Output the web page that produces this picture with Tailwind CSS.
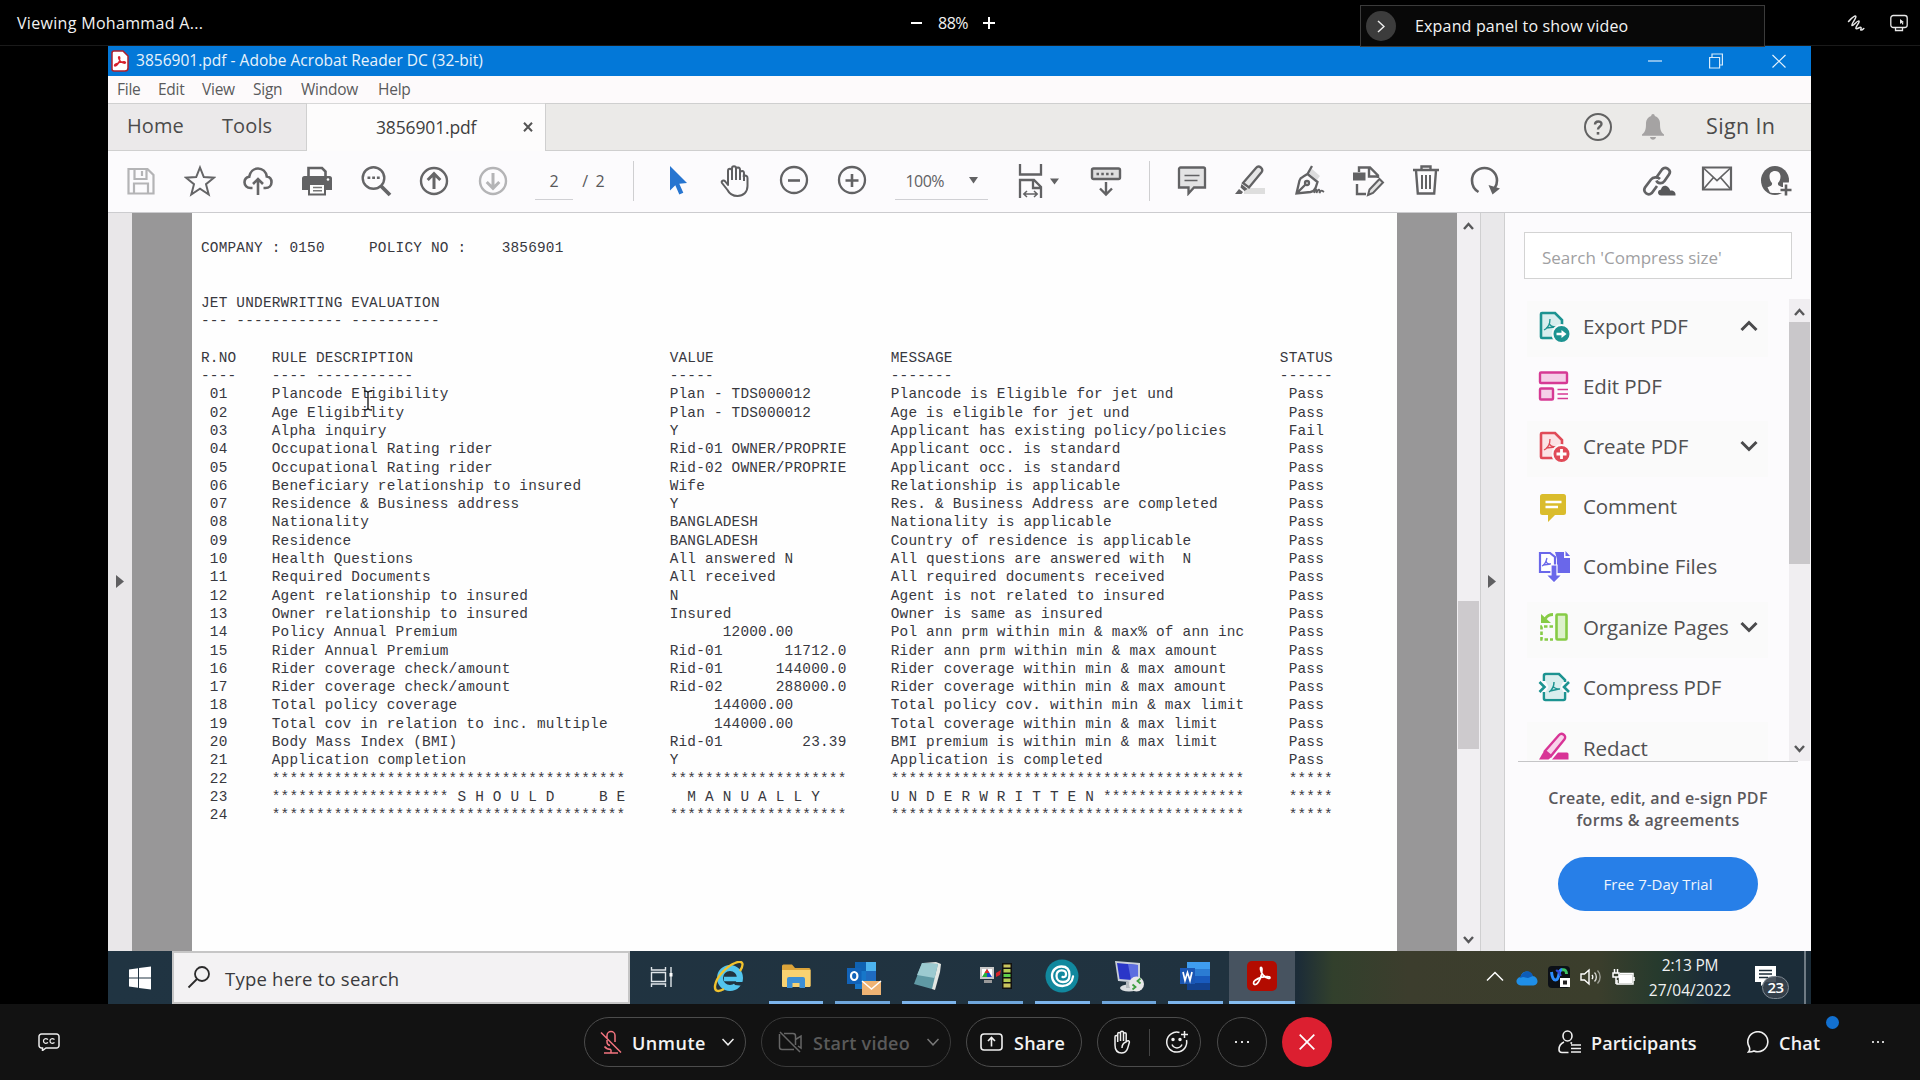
<!DOCTYPE html>
<html lang="en">
<head>
<meta charset="utf-8">
<title>Screen share</title>
<script src="https://cdn.jsdelivr.net/npm/@tailwindcss/browser@4"></script>
</head>
<body class="w-[1920px] h-[1080px] overflow-hidden bg-black font-['Open_Sans',sans-serif] flex flex-col relative">

<!-- meeting header -->
<header class="h-[46px] shrink-0 flex items-center border-b border-[#1a1a1a] text-[#f2f2f2] whitespace-nowrap">
  <div class="w-[910px] pl-[17px] text-[16px] tracking-[0.32px]"><span>Viewing Mohammad A...</span></div>
  <div class="flex items-center w-[450px]">
    <svg class="w-[14px] h-[14px]" viewBox="0 0 14 14" stroke="#fff" stroke-width="2"><path d="M1 7h11"/></svg>
    <span class="w-[58px] text-center text-[16px] tracking-[-0.5px]">88%</span>
    <svg class="w-[14px] h-[14px]" viewBox="0 0 14 14" stroke="#fff" stroke-width="2"><path d="M1 7h12M7 1v12"/></svg>
  </div>
  <div class="grow"></div>
  <svg class="w-[18px] h-[18px] mr-[25px]" viewBox="0 0 18 18" fill="none" stroke="#e8e8e8" stroke-width="1.500" stroke-linecap="round" stroke-linejoin="round"><path d="M1.500 7.500C4 5 7.500 1 8.800 2.200 10 3.500 4 10 5 11.500 6 12.500 10.500 6 12 7c1.200 1.200-4 6-3 7.500 1 1.200 4-2 5-1 .8.800-.8 2-.2 2.500.8.500 2-.5 3-1.500"/></svg>
  <svg class="w-[18px] h-[18px] mr-[12px]" viewBox="0 0 18 18" fill="none" stroke="#e8e8e8" stroke-width="1.300"><rect x=".8" y="1.500" width="16.400" height="12" rx="2.500"/><path d="M5.500 14v2.500h7V14"/><path d="M10 5v5l1.500-1.300 1 2L13.500 10 12.600 8.300h1.600z" fill="#e8e8e8" stroke="none"/></svg>
</header>

<!-- shared desktop -->
<main class="mx-[108px] w-[1703px] h-[958px] shrink-0 flex flex-col bg-[#fcfbfd] text-[#4b4b4b]">
  <div class="h-[30px] shrink-0 bg-[#0378d8] flex items-center text-white whitespace-nowrap">
    <svg class="ml-[3px] w-[18px] h-[22px]" viewBox="0 0 18 22"><path d="M3 1h9l5 5v12a3 3 0 0 1-3 3H3a2 2 0 0 1-2-2V3a2 2 0 0 1 2-2z" fill="#fff" stroke="#b0202c" stroke-width="1.500"/><path d="M4 16c2.500-.5 4.700-4 4.800-8 0-1.800-1.500-1.800-1.200 0 .4 2.500 3 5 6 5.200 1.200 0 1.200-1.400-.3-1.500-3-.1-6 .9-8.800 2.500-1.200.7-1.200 1.800-.5 1.800z" fill="none" stroke="#d8202c" stroke-width="1.400"/></svg>
    <span class="ml-[7px] text-[15.5px] tracking-[0.02px] text-[#e9f3fb]">3856901.pdf - Adobe Acrobat Reader DC (32-bit)</span>
    <div class="grow"></div>
    <svg class="w-[14px] h-[16px] mr-[47px]" viewBox="0 0 14 16" stroke="#d8ebfa" stroke-width="1.200"><path d="M0 8h14"/></svg>
    <svg class="w-[14px] h-[16px] mr-[49px]" viewBox="0 0 14 16" fill="none" stroke="#d8ebfa" stroke-width="1.200"><path d="M.6 4.500h10v10.500H.6zM3 4.500V1h10.400v11h-2.600"/></svg>
    <svg class="w-[14px] h-[16px] mr-[25px]" viewBox="0 0 14 16" fill="none" stroke="#e6f2fc" stroke-width="1.200"><path d="M.5 2l13 12.500M13.500 2l-13 12.500"/></svg>
  </div>

  <nav class="h-[27px] shrink-0 flex items-center text-[15.5px] tracking-[-0.25px] text-[#5a5a5c] bg-[#fdfafb] pl-[9px] whitespace-nowrap">
    <span class="w-[41px]">File</span><span class="w-[44px]">Edit</span><span class="w-[51px]">View</span><span class="w-[48px]">Sign</span><span class="w-[77px]">Window</span><span>Help</span>
  </nav>

  <!-- tabs -->
  <div class="h-[48px] shrink-0 flex whitespace-nowrap">
    <div class="w-[199px] bg-[#ebe9ea] border-y border-r border-[#d0d0d0] flex items-center pl-[19px] pb-[2px] text-[20px] tracking-[0.1px]"><span class="w-[95px]">Home</span><span>Tools</span></div>
    <div class="w-[238px] bg-[#fdfcfc] border-t border-[#d8d8d8] flex items-center text-[17.5px] tracking-[-0.15px] text-[#3f3f3f]"><span class="ml-[69px] w-[147px]">3856901.pdf</span>
      <svg class="w-[10px] h-[10px] mb-[2px]" viewBox="0 0 10 10" stroke="#555" stroke-width="2"><path d="M1 .8l8 8.400M9 .8l-8 8.400"/></svg></div>
    <div class="grow bg-[#ebeae8] border-y border-l border-[#cfcfcf] flex items-center pb-[1px]">
      <div class="grow"></div>
      <svg class="w-[30px] h-[30px] mr-[29px]" viewBox="0 0 30 30" fill="none" stroke="#626262" stroke-width="2"><circle cx="15" cy="15" r="13"/><path d="M12 12.500c0-4 6.500-4 6.500-.5 0 2.500-3.500 2.500-3.500 5.500" stroke-width="2.400"/><path d="M13.700 20h2.600v2.600h-2.600z" fill="#626262" stroke="none"/></svg>
      <svg class="w-[22px] h-[27px] mr-[42px]" viewBox="0 0 22 27" fill="#a5a3a3"><path d="M11 1c1 0 1.800.8 1.800 1.900C16 4 18 6.500 18 10c0 6 .5 9 4 11.500v1.200H0v-1.200C3.500 19 4 16 4 10c0-3.500 2-6 5.200-7.100C9.200 1.800 10 1 11 1zM8 24h6c-.3 1.700-1.500 2.700-3 2.700S8.300 25.700 8 24z"/></svg>
      <span class="w-[105px] text-[21.5px] tracking-[0.35px]">Sign In</span>
    </div>
  </div>

  <!-- toolbar -->
  <div class="h-[62px] shrink-0 border-b border-[#cccccf] flex items-center pl-[4px] pr-[6px] pb-[1px] text-[16px]">
    <div class="flex [&>*]:w-[58.6px] [&>*]:flex [&>*]:justify-center">
      <div><svg class="w-[30px] h-[32px]" viewBox="0 0 30 32" fill="none" stroke="#b4b4b6" stroke-width="2.200"><path d="M2.500 4h19l6 6v18.500h-25zM8.500 4v10h12V4M16 6v5M8 28V18.500h14V28"/></svg></div>
      <div><svg class="w-[32px] h-[32px]" viewBox="0 0 32 32" fill="none" stroke="#656567" stroke-width="2"><path d="M16 2.500l3.800 9.600 10.200.6-8 6.500 2.700 10.300L16 23.700l-8.700 5.800L10 19.200l-8-6.500 10.200-.6z"/></svg></div>
      <div><svg class="w-[32px] h-[32px]" viewBox="0 0 32 32" fill="none" stroke="#656567" stroke-width="2.600"><path d="M10.500 23H8.500C5 23 2.500 20.500 2.500 17.300c0-3 2-5 4.700-5.500C8 7 11.500 3.500 16 3.500s8 3.300 8.800 8c2.700.4 4.700 2.700 4.700 5.700 0 3.300-2.500 5.800-6 5.800h-2"/><path d="M16 30V14.500M11 19l5-5 5 5"/></svg></div>
      <div><svg class="w-[32px] h-[32px]" viewBox="0 0 32 32"><path d="M7.500 11V3h13.500l3.500 3.500V11" fill="none" stroke="#626264" stroke-width="2.600"/><path d="M3.500 11h25a2.500 2.500 0 0 1 2.500 2.500V25H1V13.500A2.500 2.500 0 0 1 3.500 11z" fill="#626264"/><path d="M8 19h16v10.500H8z" fill="#fff" stroke="#626264" stroke-width="2"/><path d="M12 22.500h9M12 25.800h9" stroke="#777" stroke-width="1.500"/><circle cx="27" cy="14.500" r="1.300" fill="#fff"/></svg></div>
      <div><svg class="w-[32px] h-[32px]" viewBox="0 0 32 32" fill="none" stroke="#656567"><circle cx="13.500" cy="13" r="10.800" stroke-width="2.400"/><path d="M20.500 20.500l9.500 9.500" stroke-width="3.800"/><path d="M7.500 11.500h2.800v2.600H7.500zM12.200 11.500H15v2.600h-2.800zM16.900 11.500h2.800v2.600h-2.800z" fill="#656567" stroke="none"/></svg></div>
      <div><svg class="w-[32px] h-[32px]" viewBox="0 0 32 32" fill="none" stroke="#656567" stroke-width="2.400"><circle cx="16" cy="16" r="13"/><path d="M16 24V9M9.700 15l6.300-6.300 6.300 6.300" stroke-width="3"/></svg></div>
      <div><svg class="w-[32px] h-[32px]" viewBox="0 0 32 32" fill="none" stroke="#b4b4b6" stroke-width="2.400"><circle cx="16" cy="16" r="13"/><path d="M16 8v15M9.700 17l6.300 6.300 6.300-6.300" stroke-width="3"/></svg></div>
    </div>
    <div class="w-[112px] flex items-center h-[40px] border-r border-[#cfcfd1] pl-[13px] text-[#58585a]">
      <span class="w-[38px] h-[37px] border-b border-[#d0d0d4] text-center pt-[6px]">2</span><span class="ml-[9px] tracking-[1.7px]">/ 2</span>
    </div>
    <div class="flex ml-[13px] [&>*]:w-[58.6px] [&>*]:flex [&>*]:justify-center">
      <div><svg class="w-[22px] h-[32px] ml-[3px]" viewBox="0 0 22 32" fill="#2775d0"><path d="M3 2v24.500l5.300-5.300 4 9.300 4-1.800-4-9L20 19z"/></svg></div>
      <div><svg class="w-[32px] h-[34px]" viewBox="0 0 32 34" fill="none" stroke="#5f5f61" stroke-width="2" stroke-linejoin="round"><path d="M9 19V7c0-3 3.800-3 4 0V4.500c0-3 4-3 4 0v1c.300-3 4-2.700 4 .3v3c.5-2.500 4-2.300 4 .5l-.3 3.200c1-1.500 4-1 3.800 1.500V22c0 6-4 10-10 10-5 0-8-2-10-6L3 19c-1-2 1.500-3.500 3.300-1.500L9 21zM13 7v9M17 5v11M21 8v8M25 11v6"/></svg></div>
      <div><svg class="w-[32px] h-[32px]" viewBox="0 0 32 32" fill="none" stroke="#626264" stroke-width="2.300"><circle cx="16" cy="16" r="13"/><path d="M10 16.500h12" stroke-width="2.600"/></svg></div>
      <div><svg class="w-[32px] h-[32px]" viewBox="0 0 32 32" fill="none" stroke="#626264" stroke-width="2.300"><circle cx="16" cy="16" r="13"/><path d="M9.500 16.500h13M16 10v13" stroke-width="2.600"/></svg></div>
    </div>
    <div class="w-[93px] h-[37px] ml-[13px] border-b border-[#d0d0d4] flex items-center pl-[11px] text-[#626264] tracking-[-0.6px]"><span class="w-[63px] pt-[1px]">100%</span><svg class="w-[9px] h-[7px]" viewBox="0 0 9 7" fill="#626264"><path d="M0 0h9L4.500 6.500z"/></svg></div>
    <svg class="w-[46px] h-[34px] ml-[28px]" viewBox="0 0 46 34" fill="none" stroke="#626264" stroke-width="2.300"><path d="M4 0v10.500h21V0M4 34V16h14l7 7v11M17 16.500V24h8"/><path d="M8 30h13M11 27l-3.200 3 3.200 3M18 27l3.200 3-3.200 3" stroke-width="1.500"/><path d="M34 14.500h9l-4.500 6z" fill="#626264" stroke="none"/></svg>
    <svg class="w-[32px] h-[32px] ml-[28px]" viewBox="0 0 32 32" fill="none" stroke="#626264" stroke-width="2.400"><rect x="2" y="3.500" width="28" height="10.500" rx="1.500" fill="#dededf"/><path d="M6.500 9h19" stroke-dasharray="2.500 2.300"/><path d="M16 17v12M10 23.500l6 6 6-6"/></svg>
    <div class="w-[28px] h-[40px] border-r border-[#cfcfd1]"></div>
    <div class="flex ml-[13px] [&>*]:w-[58.6px] [&>*]:flex [&>*]:justify-center">
      <div><svg class="w-[32px] h-[32px]" viewBox="0 0 32 32" fill="#e3e3e4" stroke="#626264" stroke-width="2.300"><path d="M4.500 3.500h23a1.500 1.500 0 0 1 1.500 1.500v18.500H18l-5.500 6v-6H3V5a1.500 1.500 0 0 1 1.500-1.500z"/><path d="M8.500 11.500h15M8.500 16.500h13" stroke-width="1.700"/></svg></div>
      <div><svg class="w-[32px] h-[32px]" viewBox="0 0 32 32"><path d="M10 24h21v6H10z" fill="#dedede"/><path d="M9 19L22 4c3-3.500 8 .8 5.500 4.200L15 23.500z" fill="#e6e6e7" stroke="#626264" stroke-width="2.300"/><path d="M7.500 20l6 5-3 2-4-3.500zM5 25l4 3-1.500 2H1z" fill="#626264"/></svg></div>
      <div><svg class="w-[34px] h-[32px]" viewBox="0 0 34 32" fill="none" stroke="#626264" stroke-width="2.300"><path d="M20 5l8 7-3 4-9-7.500z" fill="#dcdcdd" stroke="none"/><path d="M15.500 10l10 8-2 6c-1 2.500-2.500 3.500-5 4L4.500 29.500l3-13c.5-2 1.500-3 3.500-3.700zM4.500 29.500l9-9M15.500 10l4.500-8"/><circle cx="15" cy="19" r="2"/><path d="M22 29c2-5 3-4 2.500 0 2-5 3.500-4 3 0 2-4 3-2 4.500-1" stroke-width="1.800"/></svg></div>
      <div><svg class="w-[34px] h-[34px]" viewBox="0 0 34 34" fill="none" stroke="#626264" stroke-width="2.400"><path d="M8 8V3.500h11l8 8V14M18 4v8.500h9M6 20v10h9"/><path d="M2 8.500h12.500v8H2z" fill="#626264" stroke="none"/><path d="M17 31l1.500-5.500L28.500 15l3.500 3.500L22 29z" fill="#e2e2e2" stroke-width="2"/></svg></div>
      <div><svg class="w-[30px] h-[32px]" viewBox="0 0 30 32" fill="none" stroke="#626264" stroke-width="2.400"><path d="M2 6h26M10.500 6V2.500h9V6M5 6.500l1.800 23h16.400l1.800-23"/><path d="M11 11v14M15 11v14M19 11v14" stroke-width="2"/></svg></div>
      <div><svg class="w-[30px] h-[32px]" viewBox="0 0 30 32" fill="none" stroke="#626264" stroke-width="2.600"><path d="M8.500 28C3.500 25 2 20.500 2 16.500 2 9 7.500 4 14.500 4S27 9.500 27 16.500c0 3-.8 5.500-2.300 7.500"/><path d="M18.500 21l4 9.500 7.500-6z" fill="#626264" stroke="none"/></svg></div>
    </div>
    <div class="grow"></div>
    <div class="flex [&>*]:w-[58.6px] [&>*]:flex [&>*]:justify-center">
      <div><svg class="w-[34px] h-[32px]" viewBox="0 0 34 32" fill="none" stroke="#626264" stroke-width="2.700"><path d="M14 13l6-8.500c3.500-4 10 .5 7 5L22.500 16c-2.500 3.500-7 2.500-8-.5"/><path d="M18 14c-2.500-2.500-7-2-9 .5L3 22.500c-2.500 4.500 3 9 6.800 5.500L15 21"/><path d="M19 30.500c-4-.3-4-5.500 0-6 .5-4 5-5 7.500-2 1 1.300 1.500 2 1.500 3 3-.5 6 1 5.500 5z" fill="#58585a" stroke="none"/></svg></div>
      <div><svg class="w-[32px] h-[28px]" viewBox="0 0 32 28" fill="none" stroke="#626264" stroke-width="2.200"><path d="M2 2.500h28v22H2z"/><path d="M2.500 3L16 15.500 29.500 3M2.500 24l10-11.500M29.500 24l-10-11.500" stroke-width="1.700"/></svg></div>
      <div><svg class="w-[32px] h-[32px]" viewBox="0 0 32 32"><ellipse cx="15" cy="15.500" rx="14" ry="14.500" fill="#5f5f61"/><path d="M15 6c3.500 0 5.500 2.300 5.500 5.500 0 2.800-1 5-2.500 6.500-.4 2.300 1 3 4.500 4.200L20 27.500c-3 .8-7 .8-10 0L7.500 22.200C11 21 12.400 20.300 12 18c-1.500-1.500-2.500-3.700-2.500-6.500C9.500 8.300 11.500 6 15 6z" fill="#fcfbfd"/><path d="M26 17.500v14M18.500 25h14" stroke="#fcfbfd" stroke-width="6"/><path d="M26 19.500v11M20.500 25h11" stroke="#5f5f61" stroke-width="2.600"/></svg></div>
    </div>
  </div>

  <!-- document area -->
  <section class="h-[738px] shrink-0 flex overflow-hidden">
    <div class="w-[24px] bg-[#e9e7e9] flex items-center justify-center pb-[2px]"><svg class="w-[8px] h-[13px]" viewBox="0 0 8 13" fill="#5f5f61"><path d="M0 0l8 6.500L0 13z"/></svg></div>
    <div class="w-[60px] bg-[#989798]"></div>
    <div class="w-[1205px] bg-[#fefefe] pl-[9px] pt-[26px] relative">
      <pre id="report" class="font-['Liberation_Mono',monospace] text-[14.4px] tracking-[0.207px] leading-[18.3px] text-[#38383e]"></pre>
      <svg class="absolute left-[171px] top-[177px] w-[10px] h-[21px]" viewBox="0 0 10 21" fill="none" stroke="#222" stroke-width="1.400"><path d="M1 1c2 0 4 .5 4 2v15c0 1.500 2 2 4 2M9 1C7 1 5 1.500 5 3M1 20c2 0 4-.5 4-2"/></svg>
    </div>
    <div class="w-[60px] bg-[#989798]"></div>
    <div class="w-[23px] bg-[#f1eff2] flex flex-col items-center">
      <svg class="w-[11px] h-[8px] mt-[9px]" viewBox="0 0 11 8" fill="none" stroke="#58585a" stroke-width="2.400"><path d="M1 7l4.500-5L10 7"/></svg>
      <div class="w-[21px] h-[148px] mt-[371px] bg-[#cdcacd]"></div>
      <div class="grow"></div>
      <svg class="w-[11px] h-[8px] mb-[7px]" viewBox="0 0 11 8" fill="none" stroke="#58585a" stroke-width="2.400"><path d="M1 1l4.500 5L10 1"/></svg>
    </div>
    <div class="w-[25px] bg-[#e9e8ea] border-x border-[#cfcfd0] flex items-center pl-[7px] pb-[2px]"><svg class="w-[8px] h-[13px]" viewBox="0 0 8 13" fill="#5f5f61"><path d="M0 0l8 6.500L0 13z"/></svg></div>

    <!-- tools pane -->
    <aside class="w-[306px] flex flex-col">
      <div class="mt-[19px] ml-[19px] w-[268px] h-[47px] shrink-0 border border-[#d3d3d3] bg-white flex items-center pl-[17px] pt-[4px] text-[17px] text-[#a0a0a2]"><span>Search 'Compress size'</span></div>
      <div class="h-[482px] shrink-0 pt-[20px] flex">
        <div class="w-[263px] mr-[21px] h-[462px] overflow-hidden pl-[22px] pt-[2px] text-[20.5px] tracking-[-0.1px] text-[#505052] whitespace-nowrap [&>*]:h-[56px] [&>*]:mb-[4.200px] [&>*]:pl-[11px] [&>*]:flex [&>*]:items-center [&_span]:ml-[13px] [&_span]:w-[157px] [&_span]:pb-[6px] [&_svg]:shrink-0 [&_svg]:mb-[6px]">
          <div class="bg-[#fafafa]"><svg class="w-[32px] h-[32px]" viewBox="0 0 32 32"><path d="M4 3h13l7 7v18H4a1 1 0 0 1-1-1V4a1 1 0 0 1 1-1z" fill="#d9eeee" stroke="#1c9391" stroke-width="2.600"/><path d="M6 20c4-2 6-6 6-11M11 13c1 3 3 4 7 4M8 18l9-1" fill="none" stroke="#1c9391" stroke-width="1.300"/><circle cx="23.500" cy="24" r="9" fill="#1c9391" stroke="#fafafa" stroke-width="2"/><path d="M18.500 22.700h5V20l5 4-5 4v-2.700h-5z" fill="#fff"/></svg><span>Export PDF</span><svg class="w-[18px] h-[12px]" viewBox="0 0 18 12" fill="none" stroke="#4a4a4c" stroke-width="3"><path d="M1.500 10L9 2.500l7.500 7.500"/></svg></div>
          <div><svg class="w-[32px] h-[32px]" viewBox="0 0 32 32" fill="#f5cfe8" stroke="#d63a94" stroke-width="2.400"><rect x="2" y="2.500" width="27" height="10.500" rx="1"/><rect x="2" y="18.500" width="13" height="11" rx="1"/><path d="M19.500 19.500h10.500M19.500 24h10.500M19.500 28.500h10.500" stroke-width="1.600"/></svg><span>Edit PDF</span></div>
          <div class="bg-[#fafafa]"><svg class="w-[32px] h-[32px]" viewBox="0 0 32 32"><path d="M4 3h13l7 7v18H4a1 1 0 0 1-1-1V4a1 1 0 0 1 1-1z" fill="#fbe3e5" stroke="#e04a57" stroke-width="2.600"/><path d="M6 20c4-2 6-6 6-11M11 13c1 3 3 4 7 4M8 18l9-1" fill="none" stroke="#e04a57" stroke-width="1.300"/><circle cx="23.500" cy="24" r="9" fill="#e04a57" stroke="#fafafa" stroke-width="2"/><path d="M23.500 19v10M18.500 24h10" stroke="#fff" stroke-width="2.800"/></svg><span>Create PDF</span><svg class="w-[18px] h-[12px]" viewBox="0 0 18 12" fill="none" stroke="#4a4a4c" stroke-width="3"><path d="M1.500 2L9 9.500 16.500 2"/></svg></div>
          <div><svg class="w-[32px] h-[32px]" viewBox="0 0 32 32" fill="#dabc2c"><path d="M4.500 3h21A2.500 2.500 0 0 1 28 5.500v16a2.500 2.500 0 0 1-2.500 2.500H17l-7 7v-7H4.500A2.500 2.500 0 0 1 2 21.500v-16A2.500 2.500 0 0 1 4.500 3z"/><path d="M7.500 11h16M7.500 16h12.500" stroke="#fff" stroke-width="2.400"/></svg><span>Comment</span></div>
          <div><svg class="w-[32px] h-[32px]" viewBox="0 0 32 32"><path d="M17 1h9v6h6v15H19V8z" fill="#6a67ea"/><path d="M27.500 0L32 5h-4.500z" fill="#6a67ea"/><path d="M2 2h10l5 4v15H2z" fill="#fff" stroke="#6a67ea" stroke-width="2.200"/><path d="M4 15c3-1 4-4 5-8M8 10c1 3 2 3 5 3M5 14l8-1" fill="none" stroke="#6a67ea" stroke-width="1.300"/><path d="M13 14h6v10h5l-8 8-8-8h5z" fill="#6a67ea" stroke="#fff" stroke-width="1.200"/></svg><span class="tracking-[0.05px]">Combine Files</span></div>
          <div class="bg-[#fafafa]"><svg class="w-[32px] h-[32px]" viewBox="0 0 32 32" fill="none" stroke="#86cb45" stroke-width="2.600"><rect x="18.500" y="3.500" width="10" height="25" rx="1" fill="#ddf1cb"/><path d="M15 15.500H3.500v13H15" stroke-dasharray="3.500 2"/><path d="M15 3.500c-4 0-6 1.500-7.500 4" stroke-width="2.800"/><path d="M3 3v9h10z" fill="#86cb45" stroke="none"/></svg><span>Organize Pages</span><svg class="w-[18px] h-[12px]" viewBox="0 0 18 12" fill="none" stroke="#4a4a4c" stroke-width="3"><path d="M1.500 2L9 9.500 16.500 2"/></svg></div>
          <div><svg class="w-[32px] h-[32px]" viewBox="0 0 32 32" fill="none" stroke="#1c9391" stroke-width="2.600"><path d="M6 10V4.500A1.500 1.500 0 0 1 7.500 3H21l6 6v2M6 21v6.500A1.500 1.500 0 0 0 7.500 29h18a1.500 1.500 0 0 0 1.500-1.500V21" fill="none"/><path d="M7.500 5h13l5 5-3 6 3 5v6.500h-18V21l3-5-3-6z" fill="#d9eeee" stroke="none"/><path d="M1.500 11l5 5-5 5M31 11l-5 5 5 5"/><path d="M11 21c3-2 5-5 5-10M15 15c1 2 3 3 7 3M12 20l9-2" stroke-width="1.500"/></svg><span>Compress PDF</span></div>
          <div class="bg-[#fafafa]"><svg class="w-[32px] h-[32px]" viewBox="0 0 32 32"><path d="M14 28.500l6-7h9a1.500 1.500 0 0 1 1.500 1.500v5.500z" fill="#d83496"/><path d="M7 20L21 4c3-3 8 1 5.500 4.200L13 25z" fill="#f8d3ea" stroke="#d83496" stroke-width="2.400"/><path d="M6 20l7.500 6-3 2.500H1z" fill="#d83496"/></svg><span class="!pb-[4px]">Redact</span></div>
        </div>
        <div class="w-[21px] h-[462px] bg-[#f0eef1] flex flex-col items-center">
          <svg class="w-[11px] h-[8px] mt-[9px] mb-[6px]" viewBox="0 0 11 8" fill="none" stroke="#58585a" stroke-width="2.400"><path d="M1 7l4.500-5L10 7"/></svg>
          <div class="w-full h-[242px] bg-[#c9c7ca]"></div>
          <div class="grow"></div>
          <svg class="w-[11px] h-[8px] mb-[8px]" viewBox="0 0 11 8" fill="none" stroke="#58585a" stroke-width="2.400"><path d="M1 1l4.500 5L10 1"/></svg>
        </div>
      </div>
      <div class="ml-[13px] w-[280px] h-px bg-[#c5c5c7]"></div>
      <p class="mt-[25px] w-full text-center text-[16px] tracking-[0.28px] leading-[22px] font-semibold text-[#5a585c] whitespace-nowrap">Create, edit, and e-sign PDF<br>forms &amp; agreements</p>
      <div class="mt-[26px] ml-[53px] w-[200px] h-[54px] rounded-full bg-[#277fe8] text-[#eef5fd] text-[15px] flex items-center justify-center whitespace-nowrap"><span>Free 7-Day Trial</span></div>
    </aside>
  </section>

  <!-- windows taskbar -->
  <footer class="h-[53px] shrink-0 flex bg-[linear-gradient(90deg,#203442_0,#20323f_1120px,#1c2c38_1190px,#32402c_1225px,#3c3d2d_1300px,#3b3e2c_1490px,#263a2d_1550px,#1b2c38_1600px)]">
    <div class="w-[64px] flex items-center justify-center"><svg class="w-[24px] h-[24px]" viewBox="0 0 24 24" fill="#fff"><path d="M1 3.500l9-1.300v9.300H1zM11 2l12-1.600v11.100H11zM1 12.500h9v9.300L1 20.500zM11 12.500h12v11L11 22z"/></svg></div>
    <div class="w-[458px] bg-[#f3f2f3] border-2 border-[#c6c6c6] flex items-center text-[18.5px] tracking-[0.22px] text-[#3a3a3c] whitespace-nowrap"><svg class="ml-[13px] w-[24px] h-[24px] mb-[2px]" viewBox="0 0 24 24" fill="none" stroke="#2b2b2b" stroke-width="1.800"><circle cx="15" cy="9" r="7"/><path d="M10 14L1.500 22.500"/></svg><span class="ml-[14px] pt-[2px]">Type here to search</span></div>
    <div class="w-[66px] flex items-center justify-center pr-[5px] pb-[2px]"><svg class="w-[24px] h-[24px]" viewBox="0 0 24 24" fill="none" stroke="#dfe5e9" stroke-width="1.400"><path d="M2.500 2v3h14V2M2.500 22v-3h14v3M2.500 7.500h14v9h-14zM22 2v20"/><path d="M20.500 8h3v3.500h-3z" fill="#fff" stroke="none"/></svg></div>
    <div class="flex [&>*]:w-[66.600px] [&>*]:flex [&>*]:items-center [&>*]:justify-center [&_svg]:mb-[1px]">
      <div><svg class="w-[32px] h-[32px]" viewBox="0 0 32 32"><circle cx="17" cy="17" r="10" fill="none" stroke="#53c5ee" stroke-width="6"/><path d="M11 18h17" stroke="#53c5ee" stroke-width="4.500"/><path d="M20 21h11v4l-9-1z" fill="#20323f"/><path d="M27 10c5-8 2-11-5-8C14 5 3 16 2 25c-.5 6 4 6 9 3" fill="none" stroke="#f1c22e" stroke-width="2.400"/></svg></div>
      <div class="border-b-3 border-[#7cb4ec] mx-[6px] !w-[54.600px]"><svg class="w-[30px] h-[26px]" viewBox="0 0 30 26"><path d="M1 3a1.500 1.500 0 0 1 1.500-1.500H11L14 5h14a1.500 1.500 0 0 1 1.500 1.500V23H1z" fill="#dca43a"/><path d="M1 7h28.500v16a1 1 0 0 1-1 1H2a1 1 0 0 1-1-1z" fill="#f9d271"/><path d="M6 25v-9a2 2 0 0 1 2-2h14a2 2 0 0 1 2 2v9h-5.500v-5h-7v5z" fill="#3d8fd4"/></svg></div>
      <div class="border-b-3 border-[#6fa6dc] mx-[6px] !w-[54.600px]"><svg class="w-[36px] h-[34px] ml-[3px] !mb-[-4px]" viewBox="0 0 36 34"><path d="M9 1h21v27H9z" fill="#1777c9"/><path d="M20 1h10v9H20z" fill="#4cb3ee"/><path d="M20 10h10v9H20z" fill="#1f6bc0"/><path d="M9 1h11v9H9z" fill="#0f62b2"/><path d="M1 7h14.500v16H1z" fill="#1263b8"/><ellipse cx="8.200" cy="15" rx="3.200" ry="4" fill="none" stroke="#fff" stroke-width="2.200"/><path d="M16 20h19v14H16z" fill="#eeb374"/><path d="M16 20l9.500 8L35 20" fill="none" stroke="#fff" stroke-width="1.500"/></svg></div>
      <div class="border-b-3 border-[#7cb4ec] mx-[6px] !w-[54.600px]"><svg class="w-[30px] h-[30px] mr-[3px]" viewBox="0 0 30 30"><path d="M10 2l13-1 5 2-1 8-5 18-3-1z" fill="#e3e7e3"/><path d="M9 2l16 1-6 25-18-5z" fill="#5f99a4"/><path d="M9 2l16 1-3.500 14L4 14z" fill="#9ccad0"/></svg></div>
      <div class="border-b-3 border-[#6fa6dc] mx-[6px] !w-[54.600px]"><svg class="w-[34px] h-[28px]" viewBox="0 0 34 28"><path d="M1 5h14v12H1z" fill="#c8c8c8"/><path d="M3 7h10v8H3z" fill="#fff"/><path d="M8 7l5 8H8z" fill="#1a44d0"/><path d="M8 7v8H3z" fill="#28b03c"/><path d="M8 7l2.500 4h-5z" fill="#e62a2a"/><path d="M5 18h8v3H5z" fill="#9a9a9a"/><path d="M17 11l5-3-1 5-4 2z" fill="#d8232a"/><path d="M23 1h10v26H23z" fill="#111"/><path d="M24.500 2.500h7v3h-7zM24.500 21.500h7v4h-7z" fill="#c9c45e"/><path d="M24.500 7h7v3.500h-7zM24.500 16.500h7v3.500h-7z" fill="#b4cc55"/><path d="M24.500 12h7v3h-7z" fill="#5fd04a"/></svg></div>
      <div class="border-b-3 border-[#7cb4ec] mx-[6px] !w-[54.600px]"><svg class="w-[34px] h-[34px]" viewBox="0 0 34 34"><circle cx="17" cy="17" r="16.500" fill="#11889e"/><path d="M28 17.500c-.5 5.500-5 9.500-10.500 9.500C11.500 27 7 22.500 7 17S11 7.500 16.500 7.500 24.500 11 24.500 16s-3 7-6.500 7-6.500-2.300-6.500-6 2.300-5.700 5.300-5.700 4.500 2 4.200 4.300-2 3-3.500 2.300" fill="none" stroke="#fff" stroke-width="2.300" stroke-linecap="round"/></svg></div>
      <div class="border-b-3 border-[#6fa6dc] mx-[6px] !w-[54.600px]"><svg class="w-[32px] h-[32px]" viewBox="0 0 32 32"><ellipse cx="16" cy="28" rx="9" ry="3.500" fill="#d9dde0"/><path d="M13 22h8v6h-8z" fill="#b3b9be"/><path d="M2 1l25 2v20L5 21z" fill="#c9cfd8"/><path d="M4 3l21 2v15.500L6.500 19z" fill="#2a36c8"/><path d="M15 4l10 1v15.500L18 20z" fill="#5d6ee0"/><circle cx="23.500" cy="24" r="7.500" fill="#e8e8e8"/><path d="M19.500 24.500l3 2.500-3 2.500M27.500 18.500l-3 2.500 3 2.500" fill="none" stroke="#3f9f3f" stroke-width="1.800"/></svg></div>
      <div class="border-b-3 border-[#7cb4ec] mx-[6px] !w-[54.600px]"><svg class="w-[32px] h-[30px]" viewBox="0 0 32 30"><path d="M8 1h23v7H8z" fill="#3f9df0"/><path d="M8 8h23v7H8z" fill="#2b7cd3"/><path d="M8 15h23v7H8z" fill="#185abd"/><path d="M8 22h23v7H8z" fill="#124290"/><path d="M1 7h15v16H1z" fill="#1a56b4"/><path d="M4 11l2 8.500 2.500-8 2.500 8L13 11" fill="none" stroke="#fff" stroke-width="1.700"/></svg></div>
      <div class="border-b-3 border-[#86bdf0] bg-[#475360]"><svg class="w-[30px] h-[30px]" viewBox="0 0 30 30"><rect width="30" height="30" rx="5" fill="#b30b00"/><path d="M8.500 23.500c3-1 7-9 6.500-15.500-.3-2.500-2-2-1.500.5.500 4 4.500 8.500 8 9 2 .2 2.200-1.600-.3-1.800-4.700-.5-9 .8-13 3.500-2.500 1.800-2 4.800.3 4.300z" fill="none" stroke="#fff" stroke-width="1.700"/></svg></div>
    </div>
    <div class="grow"></div>
    <svg class="w-[18px] h-[53px] mr-[12px]" viewBox="0 0 18 53" fill="none" stroke="#fff" stroke-width="1.500"><path d="M1 29.500l8-8 8 8"/></svg>
    <svg class="w-[22px] h-[16px] mr-[10px] mt-[19px]" viewBox="0 0 22 16"><path d="M5 15.500C-1 15-1 8 4.500 7 6 0 14.500-.5 16.500 6c6 .5 7 9 1 9.500z" fill="#1f8fe8"/><path d="M4 8C6 0 15-1 17 6l-5 2-5-1z" fill="#0d5cb8"/></svg>
    <svg class="w-[22px] h-[22px] mr-[10px] mt-[15px]" viewBox="0 0 22 22"><rect width="22" height="22" rx="4" fill="#0c1016"/><path d="M3.500 6c.5 5 2 8 4 8s3-3 3.500-6 1.500-4.500 3.500-4.500" fill="none" stroke="#2d8cff" stroke-width="3"/><path d="M8 5c2-1 4 2 4.500 5" fill="none" stroke="#3049d8" stroke-width="2.500"/><path d="M14 4c3-1 4.500 1 4.500 4" fill="none" stroke="#3cc264" stroke-width="3"/><path d="M12 12h10v9H12z" fill="#fff"/><path d="M15 14.500h4v4h-4z" fill="#222"/></svg>
    <svg class="w-[22px] h-[18px] mr-[10px] mt-[17px]" viewBox="0 0 22 18" fill="none" stroke="#fff" stroke-width="1.400"><path d="M1 6v6h3.500L9 16V2L4.500 6zM12 7c1 1 1 3 0 4"/><path d="M14.500 4.500c2.500 2.500 2.500 6.500 0 9" opacity=".8"/><path d="M17.500 2.500c3.500 3.500 3.500 9.500 0 13" opacity=".5"/></svg>
    <svg class="w-[23px] h-[17px] mr-[12px] mt-[18px]" viewBox="0 0 23 17" fill="none" stroke="#fff" stroke-width="1.500"><path d="M8 4.500h13v10.500H5V11"/><path d="M7.500 6h12v7.500h-12z" fill="#fff"/><path d="M22 8v4M1 4h6v4H1zM2.500 4V0M5.500 4V0M4 8v7"/></svg>
    <div class="w-[86px] flex flex-col items-center text-[15.500px] leading-[25px] text-[#f0f2f2] pt-[2px] whitespace-nowrap"><span class="tracking-[-0.2px]">2:13 PM</span><span>27/04/2022</span></div>
    <div class="w-[71px] relative flex pl-[22px] pt-[15px]">
      <svg class="w-[21px] h-[20px]" viewBox="0 0 21 20"><path d="M0 0h21v16H11l-5 4v-4H0z" fill="#fff"/><path d="M4 4.500h13M4 8h13M4 11.500h9" stroke="#1b2c38" stroke-width="1.400"/></svg>
      <span class="absolute left-[29px] top-[25px] w-[27px] h-[23px] rounded-full bg-[#38434e]/90 border border-[#7d8790] text-white text-[15px] font-semibold leading-[21px] text-center tracking-[-0.5px]">23</span>
    </div>
    <div class="w-[7px] border-l-2 border-[#6f7b84]"></div>
  </footer>
</main>

<!-- meeting controls -->
<footer class="h-[76px] shrink-0 bg-[#121212] flex items-center text-[#f3f3f3] font-semibold text-[18px] tracking-[0.25px] whitespace-nowrap [&>*]:shrink-0 [&_span]:pt-[3px]">
  <svg class="ml-[38px] w-[22px] h-[18px]" viewBox="0 0 22 18" fill="none" stroke="#ededed" stroke-width="1.500"><path d="M3.500 1h15A2.500 2.500 0 0 1 21 3.500v9a2.500 2.500 0 0 1-2.500 2.500H8l-3.500 2.500V15h-1A2.500 2.500 0 0 1 1 12.500v-9A2.500 2.500 0 0 1 3.500 1z"/><path d="M10 6.500c-3-2-4.500 0-4.500 1.500s1.500 3.500 4.500 1.500M16.500 6.500c-3-2-4.500 0-4.500 1.500s1.500 3.500 4.500 1.500" stroke-width="1.300"/></svg>
  <div class="ml-[524px] w-[162px] h-[50px] rounded-full border border-[#4c4c4c] flex items-center">
    <svg class="ml-[15px] w-[22px] h-[24px]" viewBox="0 0 22 24" fill="none" stroke="#f2747f" stroke-width="1.500"><path d="M1 2.500l20 20M7 8V5.500a4 4 0 0 1 8 0V12M7 10v2c0 1.500 1 3 3 3.500M4.500 16.500c1.500 2 4 3 6.500 3 M11 19.500V23M4 23h14"/></svg>
    <span class="ml-[10px] w-[90px] tracking-[0.5px]">Unmute</span>
    <svg class="w-[12px] h-[8px]" viewBox="0 0 12 8" fill="none" stroke="#eee" stroke-width="1.500"><path d="M.5 1L6 6.800 11.500 1"/></svg>
  </div>
  <div class="ml-[15px] w-[190px] h-[50px] rounded-full border border-[#3a3a3a] flex items-center text-[#5a5a5a]">
    <svg class="ml-[16px] w-[24px] h-[22px]" viewBox="0 0 24 22" fill="none" stroke="#666" stroke-width="1.500"><path d="M2 1l20 20M6 2.500h9A2.500 2.500 0 0 1 17.500 5v9M17.500 8.500L23 5v12l-3-2M1.500 3v13A2.500 2.500 0 0 0 4 18.500h12"/></svg>
    <span class="ml-[11px] w-[114px]">Start video</span>
    <svg class="w-[12px] h-[8px]" viewBox="0 0 12 8" fill="none" stroke="#777" stroke-width="1.500"><path d="M.5 1L6 6.800 11.500 1"/></svg>
  </div>
  <div class="ml-[15px] w-[116px] h-[50px] rounded-full border border-[#4c4c4c] flex items-center">
    <svg class="ml-[13px] w-[23px] h-[18px]" viewBox="0 0 23 18" fill="none" stroke="#f0f0f0" stroke-width="1.600"><rect x="1" y="1" width="21" height="16" rx="3"/><path d="M11.500 13.500V5M8 8l3.500-3.500L15 8"/></svg>
    <span class="ml-[11px]">Share</span>
  </div>
  <div class="ml-[15px] w-[104px] h-[50px] rounded-full border border-[#4c4c4c] flex items-center">
    <svg class="ml-[14px] w-[20px] h-[24px]" viewBox="0 0 20 24" fill="none" stroke="#f0f0f0" stroke-width="1.500" stroke-linejoin="round"><path d="M3 15V7c0-2 2.500-2 2.700 0V4c0-2 2.800-2 2.800 0V2.800c0-2 3-2 3 0V4c0-1.800 2.700-1.800 2.700 0v8c1-2 4-1.500 3 1-1.200 3.500-1.500 10-7.500 10-4.500 0-6.700-3-6.700-8zM5.700 7v5M8.500 4v7M11.500 4v7M14 12c-3 1-4 3-4 6"/></svg>
    <div class="ml-[17px] w-px h-[27px] bg-[#444]"></div>
    <svg class="ml-[15px] w-[24px] h-[24px]" viewBox="0 0 24 24" fill="none" stroke="#f0f0f0" stroke-width="1.500"><path d="M14.500 2.500A10 10 0 1 0 21.500 10M19.500 1v7M16 4.500h7M7 14.500c2 4.500 8 4.500 10 0"/><circle cx="8" cy="9.500" r="1" fill="#fff"/><circle cx="15" cy="9.500" r="1" fill="#fff"/></svg>
  </div>
  <div class="ml-[16px] w-[50px] h-[50px] rounded-full border border-[#4c4c4c] flex items-center justify-center gap-[4px] [&>*]:w-[2px] [&>*]:h-[2px] [&>*]:bg-[#ddd]"><i></i><i></i><i></i></div>
  <div class="ml-[15px] w-[50px] h-[50px] rounded-full bg-[#dc1f30] flex items-center justify-center"><svg class="w-[16px] h-[16px]" viewBox="0 0 16 16" stroke="#fff" stroke-width="1.700"><path d="M.7.700l14.600 14.600M15.300.700L.7 15.300"/></svg></div>
  <div class="grow"></div>
  <svg class="w-[23px] h-[24px]" viewBox="0 0 23 24" fill="none" stroke="#f0f0f0" stroke-width="1.600"><ellipse cx="9.500" cy="6" rx="4.500" ry="5"/><path d="M6 12c-3.500 1.500-5 4.500-5 7.500 0 2 1 3 3 3h6.500M12.500 12.500l1.500 1M13 15h10M13 18.500h10M13 22h10"/></svg>
  <span class="ml-[10px] w-[156px] tracking-[0.1px]">Participants</span>
  <svg class="w-[22px] h-[22px]" viewBox="0 0 22 22" fill="none" stroke="#f0f0f0" stroke-width="1.600"><path d="M1.500 21c1.500-1.500 1.500-3 .8-5A10 10 0 1 1 7 20c-1.500.8-3.500 1-5.500 1z"/></svg>
  <div class="ml-[10px] w-[93px] relative pt-[2px]"><span>Chat</span><i class="absolute left-[47px] top-[-12px] w-[13px] h-[13px] rounded-full bg-[#1270d0]"></i></div>
  <div class="w-[48px] flex gap-[3px] [&>*]:w-[2px] [&>*]:h-[2px] [&>*]:bg-[#ccc]"><i></i><i></i><i></i></div>
</footer>

<!-- floating video panel toggle -->
<div class="absolute left-[1360px] top-[5px] w-[405px] h-[42px] bg-[#080808] border border-[#3b3b3b] flex items-center text-[#f4f4f4] text-[16px] tracking-[0.17px]">
  <div class="ml-[5px] w-[30px] h-[30px] rounded-full bg-[#3c3c3c] flex items-center justify-center"><svg class="w-[8px] h-[13px]" viewBox="0 0 8 13" fill="none" stroke="#eee" stroke-width="1.500"><path d="M1 1l6 5.500L1 12"/></svg></div>
  <span class="ml-[19px]">Expand panel to show video</span>
</div>

<script>
// Report columns start at character 0, 8, 53, 78 and 122.
const s = n => '*'.repeat(n);
const P = ' Pass';
const rows = [
  ['R.NO','RULE DESCRIPTION','VALUE','MESSAGE','STATUS'],
  ['----','---- -----------','-----','-------','------'],
  [' 01','Plancode Eligibility','Plan - TDS000012','Plancode is Eligible for jet und',P],
  [' 02','Age Eligibility','Plan - TDS000012','Age is eligible for jet und',P],
  [' 03','Alpha inquiry','Y','Applicant has existing policy/policies',' Fail'],
  [' 04','Occupational Rating rider','Rid-01 OWNER/PROPRIE','Applicant occ. is standard',P],
  [' 05','Occupational Rating rider','Rid-02 OWNER/PROPRIE','Applicant occ. is standard',P],
  [' 06','Beneficiary relationship to insured','Wife','Relationship is applicable',P],
  [' 07','Residence & Business address','Y','Res. & Business Address are completed',P],
  [' 08','Nationality','BANGLADESH','Nationality is applicable',P],
  [' 09','Residence','BANGLADESH','Country of residence is applicable',P],
  [' 10','Health Questions','All answered N','All questions are answered with  N',P],
  [' 11','Required Documents','All received','All required documents received',P],
  [' 12','Agent relationship to insured','N','Agent is not related to insured',P],
  [' 13','Owner relationship to insured','Insured','Owner is same as insured',P],
  [' 14','Policy Annual Premium','      12000.00','Pol ann prm within min & max% of ann inc',P],
  [' 15','Rider Annual Premium','Rid-01       11712.0','Rider ann prm within min & max amount',P],
  [' 16','Rider coverage check/amount','Rid-01      144000.0','Rider coverage within min & max amount',P],
  [' 17','Rider coverage check/amount','Rid-02      288000.0','Rider coverage within min & max amount',P],
  [' 18','Total policy coverage','     144000.00','Total policy cov. within min & max limit',P],
  [' 19','Total cov in relation to inc. multiple','     144000.00','Total coverage within min & max limit',P],
  [' 20','Body Mass Index (BMI)','Rid-01         23.39','BMI premium is within min & max limit',P],
  [' 21','Application completion','Y','Application is completed',P],
  [' 22',s(40),s(20),s(40),' '+s(5)],
  [' 23',s(20)+' S H O U L D     B E','  M A N U A L L Y','U N D E R W R I T T E N '+s(16),' '+s(5)],
  [' 24',s(40),s(20),s(40),' '+s(5)],
];
const line = r => r[0].padEnd(8) + r[1].padEnd(45) + r[2].padEnd(25) + r[3].padEnd(44) + r[4];
document.getElementById('report').textContent = [
  'COMPANY : 0150     POLICY NO :    3856901', '', '',
  'JET UNDERWRITING EVALUATION', '--- ------------ ----------', '',
  ...rows.map(line)
].join('\n');
</script>
</body>
</html>
